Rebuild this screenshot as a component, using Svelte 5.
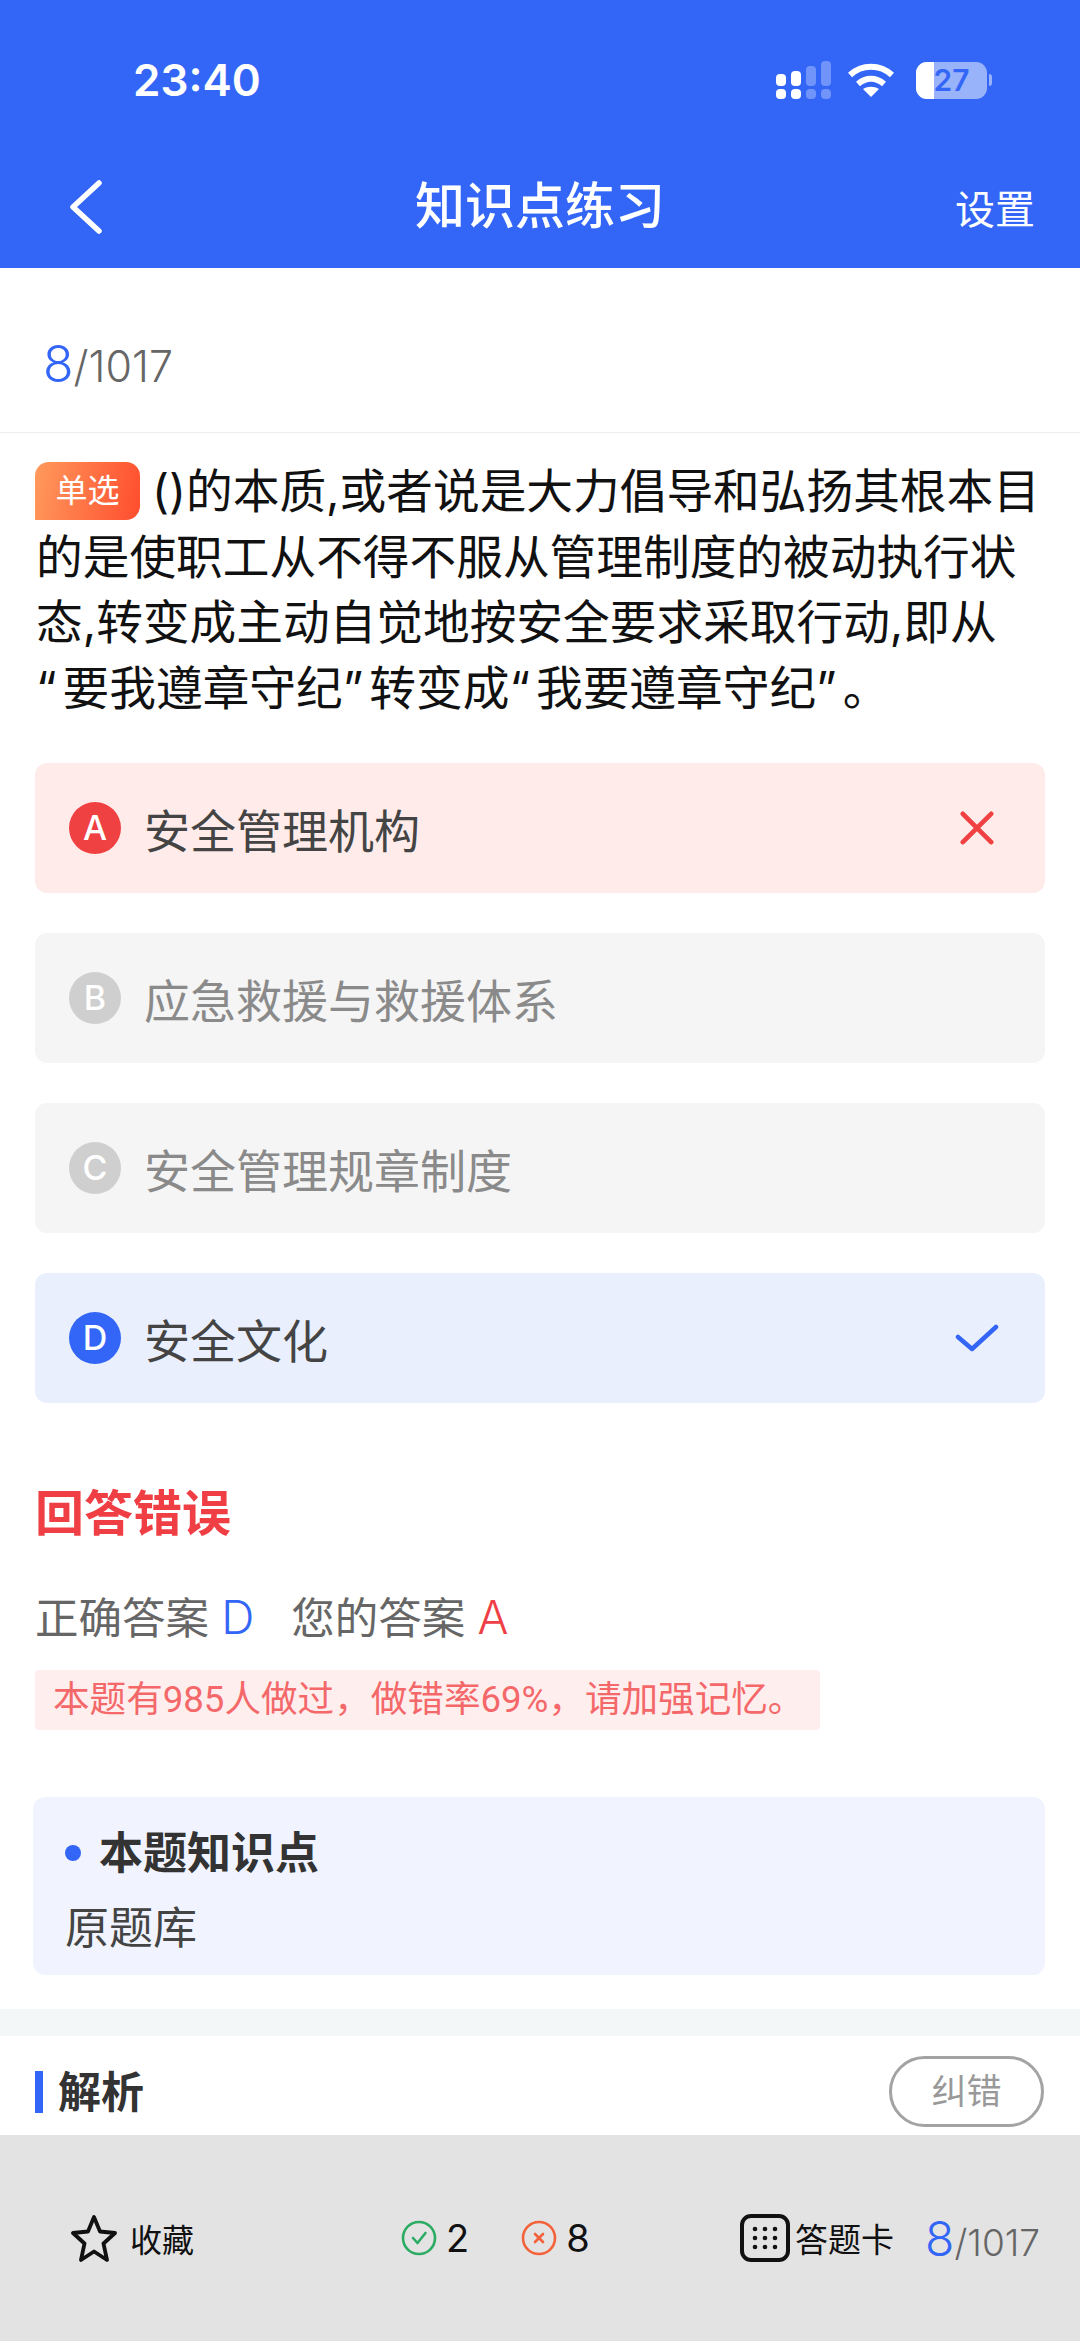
<script lang="ts">
  let options = [
    { key: "A", text: "安全管理机构", state: "wrong" },
    { key: "B", text: "应急救援与救援体系", state: "" },
    { key: "C", text: "安全管理规章制度", state: "" },
    { key: "D", text: "安全文化", state: "right" }
  ];
</script>

<div class="page">
  <header class="top">
    <div class="status">
      <span class="time">23:40</span>
      <div class="status-icons">
        <svg width="58" height="38" viewBox="0 0 58 38" fill="#fff">
          <rect x="0" y="13" width="10" height="12" rx="4" />
          <rect x="15" y="10" width="10" height="15" rx="4" />
          <rect x="30" y="5" width="10" height="20" rx="4" opacity=".3" />
          <rect x="45" y="0" width="10" height="25" rx="4" opacity=".3" />
          <rect x="0" y="28" width="10" height="10" rx="4" />
          <rect x="15" y="28" width="10" height="10" rx="4" />
          <rect x="30" y="28" width="10" height="10" rx="4" opacity=".3" />
          <rect x="45" y="28" width="10" height="10" rx="4" opacity=".3" />
        </svg>
        <svg class="wifi" width="46" height="36" viewBox="0 0 46 36" fill="none" stroke="#fff" stroke-width="6">
          <path d="M2 13 C14 2 32 2 44 13" />
          <path d="M10 22 C18 15 28 15 36 22" />
          <path d="M23 35 L15 27 C20 24 26 24 31 27 Z" fill="#fff" stroke="none" />
        </svg>
        <div class="battery">
          <div class="battery-body"><span class="battery-fill"></span><span class="battery-num">27</span></div>
          <span class="battery-tip"></span>
        </div>
      </div>
    </div>
    <nav class="nav">
      <svg class="back" width="36" height="54" viewBox="0 0 36 54" fill="none" stroke="#fff" stroke-width="5.5" stroke-linecap="round" stroke-linejoin="round">
        <path d="M31 3 L5 27 L31 51" />
      </svg>
      <h1>知识点练习</h1>
      <span class="setting">设置</span>
    </nav>
  </header>

  <main class="content">
    <div class="count"><b>8</b><span>/1017</span></div>

    <div class="question">
      <span class="tag">单选</span>()的本质,或者说是大力倡导和弘扬其根本目的是使职工从不得不服从管理制度的被动执行状态,转变成主动自觉地按安全要求采取行动,即从<wbr /><span class="q">“</span>要我遵章守纪<span class="q">”</span>转变成<span class="q">“</span>我要遵章守纪<span class="q">”</span>。
    </div>

    <div class="options">
      {#each options as o}
        <div class="option {o.state}">
          <span class="letter">{o.key}</span>
          <span class="label">{o.text}</span>
          {#if o.state === "wrong"}
            <svg class="cross" width="34" height="34" viewBox="0 0 36 36" fill="none" stroke="#f04142" stroke-width="5" stroke-linecap="round">
              <path d="M3 3 L33 33 M33 3 L3 33" />
            </svg>
          {:else if o.state === "right"}
            <svg width="44" height="32" viewBox="0 0 44 32" fill="none" stroke="#3366f6" stroke-width="4.5" stroke-linecap="round" stroke-linejoin="round">
              <path d="M3 15 L17 27 L41 5" />
            </svg>
          {/if}
        </div>
      {/each}
    </div>

    <section class="result">
      <h2>回答错误</h2>
      <p class="answers">正确答案 <em class="blue">D</em><span class="gap"></span>您的答案 <em class="red">A</em></p>
      <p class="hint">本题有985人做过，做错率69%，请加强记忆。</p>
    </section>

    <section class="points">
      <div class="points-title"><i></i>本题知识点</div>
      <div class="points-text">原题库</div>
    </section>
  </main>

  <div class="sep"></div>

  <section class="analysis">
    <h3>解析</h3>
    <span class="fix">纠错</span>
  </section>

  <footer class="bar">
    <div class="bar-item fav">
      <svg width="48" height="48" viewBox="0 0 48 48" fill="none" stroke="#111" stroke-width="3.8" stroke-linejoin="round">
        <path d="M24 3 L30 17.5 L45 19 L33.5 29.5 L37 46 L24 37.5 L11 46 L14.5 29.5 L3 19 L18 17.5 Z" />
      </svg>
      <span>收藏</span>
    </div>
    <div class="scores">
      <div class="bar-item">
        <svg width="36" height="36" viewBox="0 0 36 36" fill="none" stroke="#2cab63" stroke-width="2.6" stroke-linecap="round" stroke-linejoin="round">
          <circle cx="18" cy="18" r="16" />
          <path d="M12 18 L16.5 23 L24.5 13" />
        </svg>
        <span class="num">2</span>
      </div>
      <div class="bar-item">
        <svg width="36" height="36" viewBox="0 0 36 36" fill="none" stroke="#f4623a" stroke-width="2.6" stroke-linecap="round">
          <circle cx="18" cy="18" r="16" />
          <path d="M14 14 L22 22 M22 14 L14 22" />
        </svg>
        <span class="num">8</span>
      </div>
    </div>
    <div class="bar-item card">
      <svg width="50" height="48" viewBox="0 0 50 48" fill="none">
        <rect x="2" y="2" width="46" height="44" rx="9" stroke="#111" stroke-width="4" />
        <g fill="#111">
          {#each [15, 24, 33] as y}
            {#each [15, 25, 35] as x}
              <circle cx={x} cy={y} r="2.3" />
            {/each}
          {/each}
        </g>
      </svg>
      <span>答题卡</span>
    </div>
    <div class="count bar-count"><b>8</b><span>/1017</span></div>
  </footer>
</div>

<style>
  :global(body) {
    margin: 0;
    background: #fff;
  }
  .page {
    width: 1080px;
    height: 2341px;
    display: flex;
    flex-direction: column;
    overflow: hidden;
    font-family: Inter, "Noto Sans CJK SC", sans-serif;
    color: #111;
  }
  .top {
    background: #3366f6;
    height: 268px;
    color: #fff;
    flex: none;
  }
  .status {
    height: 150px;
    display: flex;
    align-items: center;
    justify-content: space-between;
    box-sizing: border-box;
    padding: 10px 88px 0 133px;
  }
  .time {
    font-weight: 600;
    font-size: 44px;
    line-height: 1;
  }
  .status-icons {
    display: flex;
    align-items: center;
    gap: 19px;
  }
  .wifi {
    margin: 0 3px 0 -5px;
  }
  .battery {
    display: flex;
    align-items: center;
    gap: 2px;
  }
  .battery-body {
    position: relative;
    width: 71px;
    height: 37px;
    border-radius: 11px;
    background: rgba(255, 255, 255, 0.5);
    overflow: hidden;
  }
  .battery-fill {
    position: absolute;
    left: 0;
    top: 0;
    bottom: 0;
    width: 18px;
    background: #fff;
  }
  .battery-num {
    position: absolute;
    inset: 0;
    text-align: center;
    font-weight: 600;
    font-size: 30px;
    line-height: 37px;
    color: #3366f6;
  }
  .battery-tip {
    width: 3px;
    height: 12px;
    border-radius: 0 3px 3px 0;
    background: rgba(255, 255, 255, 0.5);
  }
  .nav {
    height: 118px;
    display: flex;
    align-items: center;
    justify-content: space-between;
    padding: 0 45px 4px 68px;
    box-sizing: border-box;
    position: relative;
  }
  .nav h1 {
    position: absolute;
    left: 0;
    right: 0;
    top: -3px;
    margin: 0;
    text-align: center;
    font-size: 50px;
    font-weight: 500;
    line-height: 118px;
  }
  .setting {
    font-size: 40px;
  }
  .content {
    flex: none;
    height: 1741px;
  }
  .count {
    display: flex;
    align-items: baseline;
    font-weight: 300;
    color: #666;
    font-size: 43px;
  }
  .count b {
    font-weight: 300;
    font-size: 50px;
    color: #3366f6;
  }
  .content > .count {
    height: 165px;
    box-sizing: border-box;
    padding: 66px 0 0 43px;
    border-bottom: 1px solid #eeeeee;
  }
  .question {
    padding: 26px 26px 0 36px;
    font-size: 46.7px;
    line-height: 65.5px;
    color: #111;
    letter-spacing: 0;
  }
  .q {
    letter-spacing: 6px;
  }
  .tag {
    display: inline-block;
    vertical-align: 6px;
    width: 105px;
    height: 58px;
    margin-right: 12px;
    margin-left: -1px;
    border-radius: 14px 14px 14px 0;
    background: linear-gradient(100deg, #ff9a5c, #ff4d2e);
    color: #fff;
    font-size: 32px;
    line-height: 58px;
    text-align: center;
  }
  .options {
    margin: 42px 35px 0;
    display: flex;
    flex-direction: column;
    gap: 40px;
  }
  .option {
    height: 130px;
    border-radius: 12px;
    background: #f5f5f5;
    display: flex;
    align-items: center;
    padding: 0 46px 0 34px;
    color: #8a8a8a;
    font-size: 46px;
  }
  .letter {
    width: 52px;
    height: 52px;
    border-radius: 50%;
    background: #cfcfcf;
    color: #fff;
    font-size: 34px;
    font-weight: 500;
    line-height: 52px;
    text-align: center;
    margin-right: 23px;
    flex: none;
  }
  .label {
    flex: 1;
  }
  .cross {
    margin-right: 5px;
  }
  .option.wrong {
    background: #ffecea;
    color: #444;
  }
  .option.wrong .letter {
    background: #f04142;
  }
  .option.right {
    background: #e9effd;
    color: #444;
  }
  .option.right .letter {
    background: #3366f6;
  }
  .result {
    padding: 76px 35px 0;
  }
  .result h2 {
    margin: 0;
    font-size: 49px;
    line-height: 70px;
    font-weight: 700;
    color: #ef3f45;
  }
  .answers {
    margin: 38px 0 0;
    font-size: 43.5px;
    line-height: 60px;
    color: #666;
  }
  .answers em {
    font-style: normal;
    font-weight: 300;
    font-size: 46px;
  }
  .blue {
    color: #3366f6;
  }
  .red {
    color: #ef3f45;
  }
  .gap {
    display: inline-block;
    width: 37px;
  }
  .hint {
    margin: 22px 0 0;
    width: 785px;
    height: 60px;
    box-sizing: border-box;
    padding-left: 18px;
    border-radius: 4px;
    background: #ffeeee;
    color: #f4686a;
    font-family: Roboto, "Noto Sans CJK SC", sans-serif;
    font-size: 36.6px;
    line-height: 60px;
    white-space: nowrap;
  }
  .points {
    margin: 67px 35px 0 33px;
    height: 178px;
    box-sizing: border-box;
    padding: 26px 32px 0;
    border-radius: 12px;
    background: #f1f4fe;
  }
  .points-title {
    display: flex;
    align-items: center;
    font-size: 44px;
    line-height: 60px;
    font-weight: 700;
    color: #333;
  }
  .points-title i {
    width: 16px;
    height: 16px;
    border-radius: 50%;
    background: #3366f6;
    margin-right: 18px;
  }
  .points-text {
    margin-top: 15px;
    font-size: 44px;
    line-height: 60px;
    color: #444;
  }
  .sep {
    flex: none;
    height: 27px;
    background: #f4f7f8;
  }
  .analysis {
    flex: none;
    height: 99px;
    box-sizing: border-box;
    display: flex;
    align-items: center;
    justify-content: space-between;
    padding: 12px 36px 0 35px;
  }
  .analysis h3 {
    margin: 0;
    padding-left: 15px;
    border-left: 8px solid #3366f6;
    font-size: 43px;
    line-height: 42px;
    font-weight: 700;
    color: #333;
  }
  .fix {
    width: 155px;
    height: 71px;
    box-sizing: border-box;
    border: 3.5px solid #a3a3a3;
    border-radius: 36px;
    color: #999;
    font-size: 35px;
    line-height: 64px;
    text-align: center;
  }
  .bar {
    flex: 1;
    background: #e3e3e3;
    display: flex;
    align-items: center;
    padding: 0 40px 0 70px;
  }
  .bar-item {
    display: flex;
    align-items: center;
    font-size: 32px;
  }
  .fav {
    gap: 12px;
  }
  .scores {
    display: flex;
    gap: 52px;
    margin-left: 207px;
  }
  .scores .bar-item {
    gap: 9px;
  }
  .num {
    font-size: 38px;
    font-weight: 400;
  }
  .card {
    margin-left: auto;
    gap: 5px;
    font-size: 33px;
  }
  .bar-count {
    margin-left: 31px;
    font-size: 37px;
  }
  .bar-count b {
    font-size: 48px;
  }
</style>
